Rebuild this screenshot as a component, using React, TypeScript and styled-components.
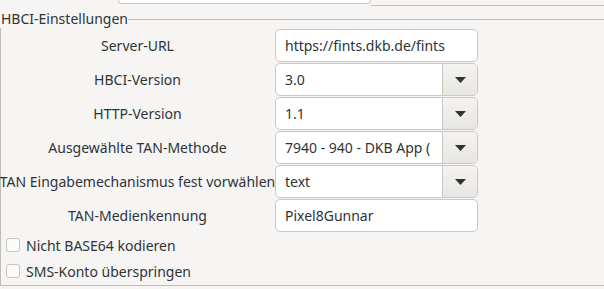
import React from "react";
import styled, { createGlobalStyle } from "styled-components";

const Global = createGlobalStyle`
  html, body { margin: 0; padding: 0; background: #f6f5f4; }
  body { font-family: "Noto Sans", "DejaVu Sans", sans-serif; font-size: 14px; color: #2e3436; overflow: hidden; }
  * { box-sizing: border-box; }
`;

const Page = styled.div`
  width: 604px;
  height: 289px;
  background: #f6f5f4;
  overflow: hidden;
`;

const TopBar = styled.div`
  display: flex;
  align-items: flex-start;
  height: 6px;
`;

const TopSpacer = styled.div`
  width: 118px;
  height: 6px;
`;

const TabStub = styled.div`
  width: 253px;
  height: 4px;
  background: #ffffff;
  border: 1px solid #cdc7c2;
  border-top: none;
  border-radius: 0 0 5px 5px;
`;

const TopLine = styled.div`
  flex: 1;
  height: 6px;
  border-bottom: 1px solid #c0bdb9;
`;

const Frame = styled.section`
  margin-top: 4px;
  width: 620px;
`;

const LegendRow = styled.div`
  display: flex;
  align-items: center;
  height: 18px;
`;

const LegendText = styled.span`
  padding-left: 1px;
  line-height: 18px;
  white-space: nowrap;
`;

const LegendLine = styled.div`
  flex: 1;
  height: 1px;
  background: #c0bdb9;
  margin-top: 1px;
`;

const FrameBody = styled.div`
  border-left: 1px solid #c0bdb9;
  border-bottom: 1px solid #c0bdb9;
  padding-top: 1px;
  height: 258px;
`;

const FormGrid = styled.div`
  display: grid;
  grid-template-columns: 273px 203px;
  grid-auto-rows: 33px;
  column-gap: 1px;
  row-gap: 1px;
`;

const Label = styled.div`
  display: flex;
  align-items: center;
  justify-content: center;
  white-space: nowrap;
`;

const Entry = styled.div`
  display: flex;
  align-items: center;
  background: #ffffff;
  border: 1px solid #cdc7c2;
  border-radius: 5px;
  padding: 0 9px;
  color: #2e3436;
  white-space: nowrap;
  overflow: hidden;
`;

const Combo = styled.div`
  display: flex;
  background: #ffffff;
  border: 1px solid #cdc7c2;
  border-radius: 5px;
  overflow: hidden;
`;

const ComboText = styled.div`
  flex: 1;
  display: flex;
  align-items: center;
  padding-left: 9px;
  white-space: nowrap;
  overflow: hidden;
`;

const ComboButton = styled.div`
  width: 35px;
  display: flex;
  align-items: center;
  justify-content: center;
  border-left: 1px solid #cdc7c2;
  background: linear-gradient(#f4f3f1, #e8e6e3);
`;

const Checks = styled.div`
  display: flex;
  flex-direction: column;
`;

const CheckRow = styled.label`
  display: flex;
  align-items: center;
  height: 26px;
  padding-left: 5px;
  gap: 6px;
  white-space: nowrap;
`;

const CheckBox = styled.span`
  width: 14px;
  height: 14px;
  border: 1px solid #c8c3be;
  border-radius: 3px;
  background: #fbfbfa;
`;

const Arrow = () => (
  <svg width="11" height="6" viewBox="0 0 11 6">
    <path d="M0 0 H11 L5.5 6 Z" fill="#2e3436" />
  </svg>
);

const ComboField = ({ value }: { value: string }) => (
  <Combo>
    <ComboText>{value}</ComboText>
    <ComboButton>
      <Arrow />
    </ComboButton>
  </Combo>
);

export default function App() {
  return (
    <Page>
      <Global />
      <TopBar>
        <TopSpacer />
        <TabStub />
        <TopLine />
      </TopBar>
      <Frame>
        <LegendRow>
          <LegendText>HBCI-Einstellungen</LegendText>
          <LegendLine />
        </LegendRow>
        <FrameBody>
          <FormGrid>
            <Label>Server-URL</Label>
            <Entry>https://fints.dkb.de/fints</Entry>
            <Label>HBCI-Version</Label>
            <ComboField value="3.0" />
            <Label>HTTP-Version</Label>
            <ComboField value="1.1" />
            <Label>Ausgewählte TAN-Methode</Label>
            <ComboField value="7940 - 940 - DKB App (" />
            <Label>TAN Eingabemechanismus fest vorwählen</Label>
            <ComboField value="text" />
            <Label>TAN-Medienkennung</Label>
            <Entry>Pixel8Gunnar</Entry>
          </FormGrid>
          <Checks>
            <CheckRow>
              <CheckBox />
              Nicht BASE64 kodieren
            </CheckRow>
            <CheckRow>
              <CheckBox />
              SMS-Konto überspringen
            </CheckRow>
          </Checks>
        </FrameBody>
      </Frame>
    </Page>
  );
}
